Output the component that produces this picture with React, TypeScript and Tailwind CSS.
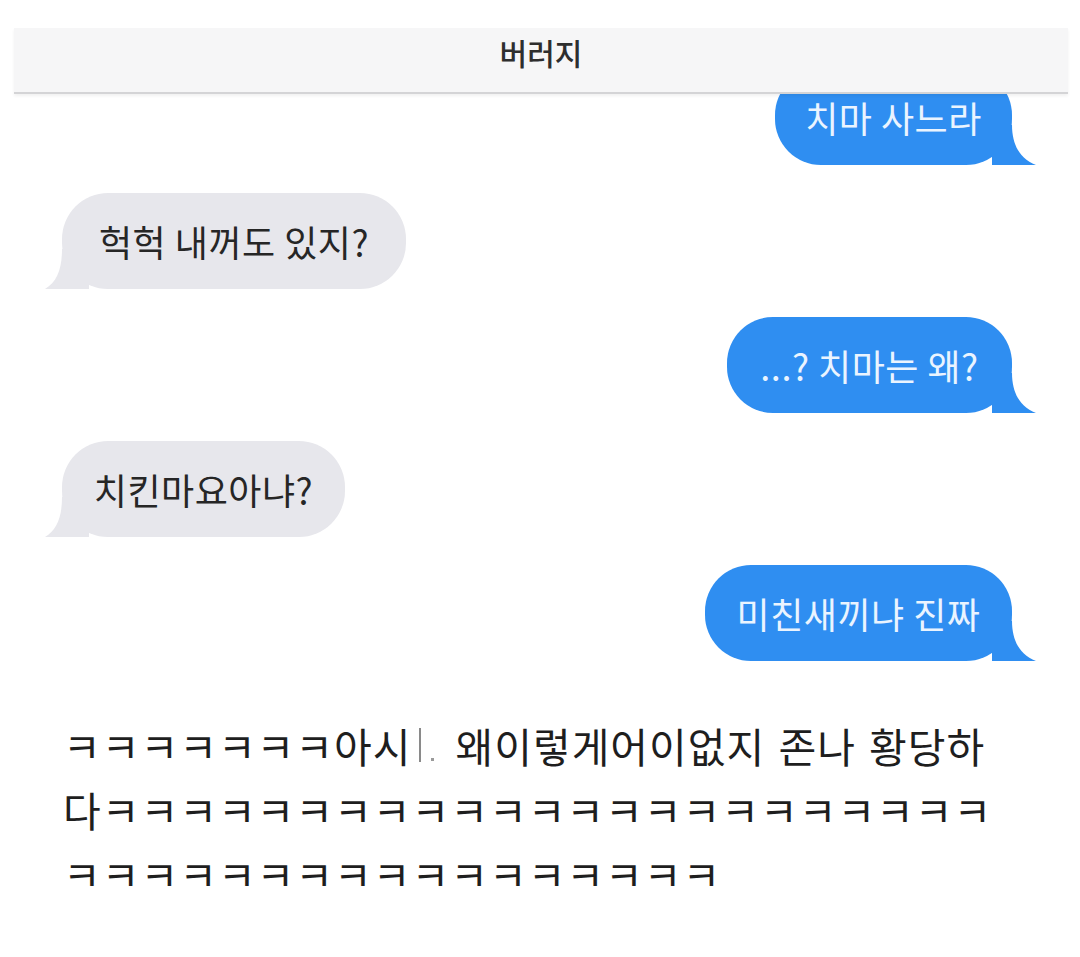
import React from "react";

type Msg = { text: string; mine: boolean; w: string };

const messages: Msg[] = [
  { text: "치마 사느라", mine: true, w: "w-[237px]" },
  { text: "헉헉 내꺼도 있지?", mine: false, w: "w-[344px]" },
  { text: "...? 치마는 왜?", mine: true, w: "w-[285px]" },
  { text: "치킨마요아냐?", mine: false, w: "w-[283px]" },
  { text: "미친새끼냐 진짜", mine: true, w: "w-[307px]" },
];

const font = { fontFamily: '"Noto Sans CJK KR", "Noto Sans", sans-serif' };

function Tail({ mine }: { mine: boolean }) {
  if (mine) {
    return (
      <svg
        width="44"
        height="40"
        viewBox="0 0 44 40"
        className="absolute bottom-0 right-[-24px]"
      >
        <path d="M0 0 H20 C20 20 28 34 44 40 C30 41 14 40 0 40 Z" fill="#2f8ef1" />
      </svg>
    );
  }
  return (
    <svg
      width="44"
      height="40"
      viewBox="0 0 44 40"
      className="absolute bottom-0 left-[-17px]"
    >
      <path d="M44 0 H17 C17 20 12 33 0 40 C12 41 30 40 44 40 Z" fill="#e7e7ec" />
    </svg>
  );
}

function Bubble({ msg }: { msg: Msg }) {
  return (
    <div className={msg.mine ? "flex justify-end pr-[68px]" : "flex justify-start pl-[62px]"}>
      <div
        className={
          "relative h-[96px] rounded-[46px] flex items-center justify-center text-[36px] tracking-[0.5px] " +
          msg.w +
          (msg.mine ? " bg-[#2f8ef1] text-[#eaf4ff]" : " bg-[#e7e7ec] text-[#262626]")
        }
        style={font}
      >
        <Tail mine={msg.mine} />
        <span className="relative whitespace-pre">{msg.text}</span>
      </div>
    </div>
  );
}

export default function App() {
  return (
    <div className="relative w-[1080px] h-[957px] bg-white overflow-hidden" style={font}>
      <div className="absolute top-[28px] left-[14px] right-[12px] h-[66px] z-10 bg-[#f6f6f7] border-b-2 border-[#d4d4d6] shadow-[0_2px_3px_rgba(0,0,0,0.06)] flex items-center justify-center">
        <span className="text-[30px] font-medium text-[#2e2e2e] -mt-[16px]">버러지</span>
      </div>

      <div className="flex flex-col gap-[28px] pt-[69px]">
        {messages.map((m, i) => (
          <Bubble key={i} msg={m} />
        ))}
      </div>

      <div className="pl-[63px] pt-[52px] text-[41px] leading-[64px] text-[#1e1e1e] tracking-[1px] whitespace-pre">
        <div className="flex items-center">
          <span>ㅋㅋㅋㅋㅋㅋㅋ아시</span>
          <span className="inline-flex w-[44px] h-[40px] items-end">
            <span className="ml-[8px] w-[2px] h-[34px] self-center bg-[#8a8a8a]" />
            <span className="ml-[10px] mb-[4px] w-[3px] h-[3px] bg-[#9a9a9a]" />
          </span>
          <span className="[word-spacing:3px]">왜이렇게어이없지 존나 황당하</span>
        </div>
        <div>다ㅋㅋㅋㅋㅋㅋㅋㅋㅋㅋㅋㅋㅋㅋㅋㅋㅋㅋㅋㅋㅋㅋㅋ</div>
        <div>ㅋㅋㅋㅋㅋㅋㅋㅋㅋㅋㅋㅋㅋㅋㅋㅋㅋ</div>
      </div>
    </div>
  );
}
